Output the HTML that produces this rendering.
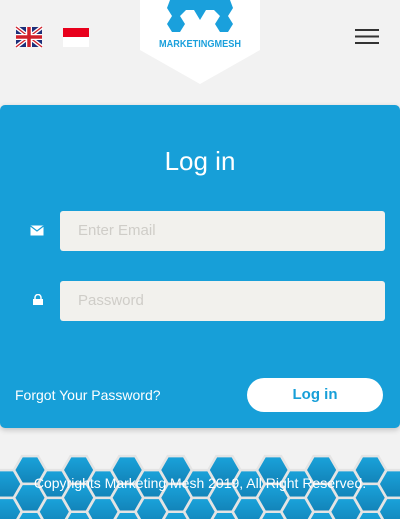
<!DOCTYPE html>
<html style="overflow:hidden"><head><style>
body{margin:0;width:400px;height:519px;overflow:hidden;background:#f2f2f2;font-family:"Liberation Sans",sans-serif;position:relative}
.abs{position:absolute}
.card{left:0;top:105px;width:400px;height:323px;background:#179fd8;border-radius:5px;box-shadow:0 2px 6px rgba(0,0,0,.2)}
.inp{left:60px;width:325px;height:40px;background:#f2f1ed;border-radius:3px;color:#cfcdc8;font-size:15px;line-height:40px;text-indent:18px}
</style></head><body>
<svg class="abs" style="left:0;top:0" width="400" height="519">
<defs>
<linearGradient id="bg" x1="0" y1="0" x2="0" y2="1"><stop offset="0" stop-color="#1aa3db"/><stop offset="1" stop-color="#1283b8"/></linearGradient></defs>
<rect x="16" y="27" width="26" height="20" fill="#1d2f7a"/>
<path d="M16 27L42 47M42 27L16 47" stroke="#fff" stroke-width="4"/>
<path d="M16 27L42 47M42 27L16 47" stroke="#d0202a" stroke-width="1.3"/>
<path d="M29 27V47M16 37H42" stroke="#fff" stroke-width="6"/>
<path d="M29 27V47M16 37H42" stroke="#d0202a" stroke-width="3.5"/>
<rect x="63" y="28" width="26" height="9" fill="#e8001c"/>
<rect x="63" y="37" width="26" height="10" fill="#fff"/>
<path d="M355 30H379M355 36.5H379M355 43H379" stroke="#333" stroke-width="2"/>
<polygon points="140,0 260,0 260,50 200,84 140,50" fill="#fff"/>
<path d="M170 0 L167 8 L172 16 L180 16 L186 10 L194 10 L200 20 L206 10 L214 10 L220 16 L228 16 L233 8 L230 0 Z M172 16 L167 24 L172 32 L180 32 L185 24 L180 16 Z M228 16 L220 16 L215 24 L220 32 L228 32 L233 24 Z" fill="#1aa0dc"/>
<text x="159" y="47" font-size="10" font-weight="bold" fill="#1aa0dc" textLength="82" lengthAdjust="spacingAndGlyphs" font-family="Liberation Sans">MARKETINGMESH</text>
<g fill="url(#bg)" stroke="#e4e4e4" stroke-width="2.5" id="hx"></g>
</svg>
<div class="abs card"></div>
<div class="abs" style="left:0;top:146px;width:400px;text-align:center;color:#fff;font-size:26px">Log in</div>
<svg class="abs" style="left:30px;top:225px" width="14" height="11"><rect x="0.5" y="0.5" width="13" height="10" fill="#fff"/><path d="M0.5 1L7 6L13.5 1" stroke="#179fd8" fill="none" stroke-width="1.2"/></svg>
<svg class="abs" style="left:33px;top:294px" width="10" height="11"><path d="M2 5V3.5a3 3 0 0 1 6 0V5" stroke="#fff" stroke-width="1.5" fill="none"/><rect x="0" y="5" width="10" height="6" fill="#fff"/></svg>
<div class="abs inp" style="top:211px">Enter Email</div>
<div class="abs inp" style="top:281px">Password</div>
<div class="abs" style="left:15px;top:387px;color:#fff;font-size:14px">Forgot Your Password?</div>
<div class="abs" style="left:247px;top:378px;width:136px;height:34px;background:#fff;border-radius:17px;color:#179fd8;font-size:15px;font-weight:bold;text-align:center;line-height:34px">Log in</div>
<div class="abs" style="left:0;top:475px;width:400px;text-align:center;color:#fff;font-size:14px">Copyrights Marketing Mesh 2019, All Right Reserved.</div>
<script>
var g=document.getElementById('hx'),s=16,h=13.9,out='';
for(var c=-1;c<19;c++){var cx=30+c*24.3;var odd=c%2!==0;var start=odd?484:470;
for(var cy=start;cy<540;cy+=27.8){var p=[[cx-s,cy],[cx-s/2,cy-h],[cx+s/2,cy-h],[cx+s,cy],[cx+s/2,cy+h],[cx-s/2,cy+h]];
out+='<polygon points="'+p.map(function(a){return a.join(',')}).join(' ')+'"/>';}}
g.innerHTML=out;
</script>
</body></html>
